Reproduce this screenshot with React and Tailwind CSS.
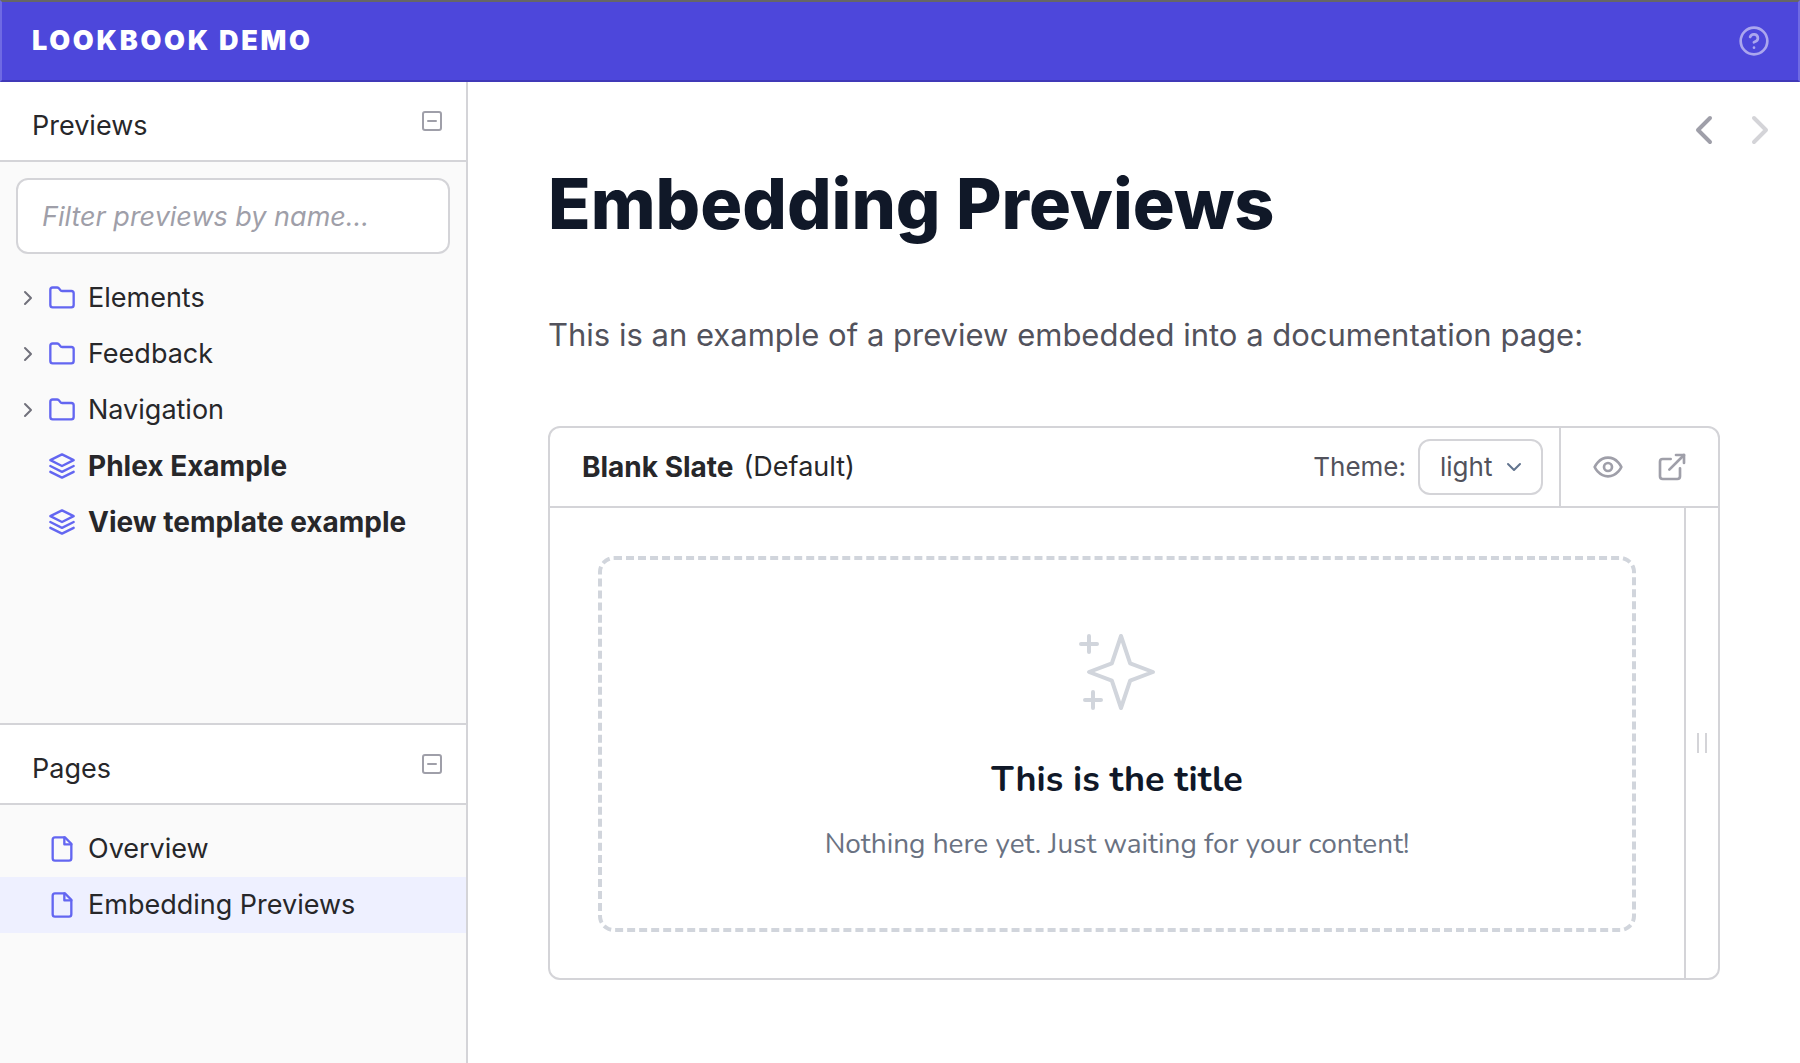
import React from "react";

function Icon({ className, strokeWidth = 2, children }) {
  return (
    <svg
      viewBox="0 0 24 24"
      fill="none"
      stroke="currentColor"
      strokeWidth={strokeWidth}
      strokeLinecap="round"
      strokeLinejoin="round"
      aria-hidden="true"
      className={className}
    >
      {children}
    </svg>
  );
}

function FolderIcon() {
  return (
    <Icon className="size-7 shrink-0 text-[#6366f1]">
      <path d="M4 20h16a2 2 0 0 0 2-2V8a2 2 0 0 0-2-2h-7.93a2 2 0 0 1-1.66-.9l-.82-1.2A2 2 0 0 0 7.93 3H4a2 2 0 0 0-2 2v13c0 1.1.9 2 2 2Z" />
    </Icon>
  );
}

function LayersIcon() {
  return (
    <Icon className="size-7 shrink-0 text-[#6366f1]">
      <path d="M12 2 2 7l10 5 10-5-10-5Z" />
      <path d="m2 17 10 5 10-5" />
      <path d="m2 12 10 5 10-5" />
    </Icon>
  );
}

function FileIcon() {
  return (
    <Icon className="size-7 shrink-0 text-[#6366f1]">
      <path d="M14.5 2H6a2 2 0 0 0-2 2v16a2 2 0 0 0 2 2h12a2 2 0 0 0 2-2V7.5L14.5 2z" />
      <path d="M14 2v6h6" />
    </Icon>
  );
}

function PanelHeader({ title }) {
  return (
    <header className="flex h-20 shrink-0 items-center justify-between border-b-2 border-zinc-300 bg-white pr-[22px] pl-8">
      <h2 className="pt-[10px]">{title}</h2>
      <button type="button" aria-label={"Collapse " + title} className="text-zinc-400">
        <Icon className="size-6">
          <rect x="3" y="3" width="18" height="18" rx="2" />
          <path d="M8 12h8" />
        </Icon>
      </button>
    </header>
  );
}

function FolderItem({ label }) {
  return (
    <li>
      <button type="button" aria-expanded="false" className="flex h-14 w-full items-center pl-4">
        <Icon className="mr-2 size-6 shrink-0 text-zinc-500">
          <path d="m9 18 6-6-6-6" />
        </Icon>
        <FolderIcon />
        <span className="ml-3">{label}</span>
      </button>
    </li>
  );
}

function LinkItem({ label, icon, className = "" }) {
  return (
    <li>
      <a href="#" className={"flex h-14 items-center gap-3 pl-12 " + className}>
        {icon}
        <span>{label}</span>
      </a>
    </li>
  );
}

function Sidebar() {
  return (
    <aside className="grid w-[26%] shrink-0 grid-rows-[641fr_340fr] border-r-2 border-zinc-300 bg-[#fafafa]">
      <section>
        <PanelHeader title="Previews" />
        <div className="p-4">
          <input
            type="text"
            aria-label="Filter previews"
            placeholder="Filter previews by name…"
            className="h-[76px] w-full rounded-xl border-2 border-zinc-300 bg-white px-6 placeholder:text-zinc-400 placeholder:italic"
          />
        </div>
        <ul>
          <FolderItem label="Elements" />
          <FolderItem label="Feedback" />
          <FolderItem label="Navigation" />
          <LinkItem label="Phlex Example" icon={<LayersIcon />} className="text-[28px] font-bold" />
          <LinkItem label="View template example" icon={<LayersIcon />} className="text-[28px] font-bold" />
        </ul>
      </section>
      <section className="border-t-2 border-zinc-300">
        <PanelHeader title="Pages" />
        <ul className="pt-4">
          <LinkItem label="Overview" icon={<FileIcon />} />
          <LinkItem label="Embedding Previews" icon={<FileIcon />} className="bg-[#eef0ff]" />
        </ul>
      </section>
    </aside>
  );
}

function PreviewEmbed() {
  return (
    <section className="mt-[63px] overflow-hidden rounded-xl border-2 border-zinc-300">
      <header className="flex h-20 items-stretch border-b-2 border-zinc-300">
        <h2 className="flex flex-1 items-center gap-[10px] pl-8">
          <span className="text-[28px] font-bold">Blank Slate</span>
          <span>(Default)</span>
        </h2>
        <div className="flex items-center gap-3 pr-4 text-[26px] text-zinc-600">
          <label htmlFor="theme">Theme:</label>
          <div className="relative">
            <select
              id="theme"
              defaultValue="light"
              className="h-14 appearance-none rounded-xl border-2 border-zinc-300 bg-white pr-12 pl-5"
            >
              <option value="light">light</option>
            </select>
            <Icon className="pointer-events-none absolute top-4 right-[17px] size-6 text-slate-500">
              <path d="m6 9 6 6 6-6" />
            </Icon>
          </div>
        </div>
        <div className="flex items-center gap-8 border-l-2 border-zinc-300 pr-[30px] pl-[31px] text-zinc-400">
          <button type="button" aria-label="Inspect preview">
            <Icon className="size-8">
              <path d="M2 12s3-7 10-7 10 7 10 7-3 7-10 7-10-7-10-7Z" />
              <circle cx="12" cy="12" r="3" />
            </Icon>
          </button>
          <button type="button" aria-label="Open in new window">
            <Icon className="size-8">
              <path d="M18 13v6a2 2 0 0 1-2 2H5a2 2 0 0 1-2-2V8a2 2 0 0 1 2-2h6" />
              <path d="M15 3h6v6" />
              <path d="M10 14 21 3" />
            </Icon>
          </button>
        </div>
      </header>
      <div className="flex">
        <div className="flex-1 px-12 pt-12 pb-[46px]">
          <div className="flex flex-col items-center rounded-2xl border-4 border-dashed border-gray-300 py-16 text-center font-['Nunito','Open_Sans',sans-serif]">
            <Icon className="size-24 text-gray-300" strokeWidth={1}>
              <path d="M5 3v4M3 5h4M6 17v4m-2-2h4m5-16l2.286 6.857L21 12l-5.714 2.143L13 21l-2.286-6.857L5 12l5.714-2.143L13 3z" />
            </Icon>
            <h3 className="mt-10 text-[36px] leading-10 font-bold text-gray-900">This is the title</h3>
            <p className="mt-6 text-[28px] leading-10 text-gray-500">
              Nothing here yet. Just waiting for your content!
            </p>
          </div>
        </div>
        <div className="flex w-[34px] cursor-ew-resize items-center justify-center gap-[6px] border-l-2 border-zinc-300">
          <span className="h-5 w-[2px] bg-zinc-300" />
          <span className="h-5 w-[2px] bg-zinc-300" />
        </div>
      </div>
    </section>
  );
}

export default function App() {
  return (
    <div className="flex min-h-screen flex-col bg-white font-['Inter',sans-serif] text-[27px] leading-10 text-zinc-800">
      <header className="flex h-[82px] items-center justify-between border-2 border-x-[#6f6ae3] border-t-[#666666] border-b-[#4039b8] bg-[#4d47db] pr-7 pl-[30px]">
        <h1 className="font-black tracking-widest text-white uppercase">Lookbook Demo</h1>
        <button type="button" aria-label="Help" className="text-[#aba6ee]">
          <Icon className="size-8">
            <circle cx="12" cy="12" r="10" />
            <path d="M9.09 9a3 3 0 0 1 5.83 1c0 2-3 3-3 3" />
            <path d="M12 17h.01" />
          </Icon>
        </button>
      </header>
      <div className="flex flex-1">
        <Sidebar />
        <main className="min-w-0 flex-1">
          <nav aria-label="Page navigation" className="flex justify-end gap-2 pt-6 pr-4">
            <a href="#" aria-label="Previous page" className="text-zinc-400">
              <Icon className="size-12">
                <path d="m15 18-6-6 6-6" />
              </Icon>
            </a>
            <a href="#" aria-label="Next page" className="text-zinc-300">
              <Icon className="size-12">
                <path d="m9 18 6-6-6-6" />
              </Icon>
            </a>
          </nav>
          <article className="px-20 pt-[10px] pb-20">
            <h1 className="text-[70px] leading-[80px] font-extrabold text-gray-900">
              Embedding Previews
            </h1>
            <p className="mt-[63px] text-[31px] leading-14 text-zinc-600">
              This is an example of a preview embedded into a documentation page:
            </p>
            <PreviewEmbed />
          </article>
        </main>
      </div>
    </div>
  );
}
